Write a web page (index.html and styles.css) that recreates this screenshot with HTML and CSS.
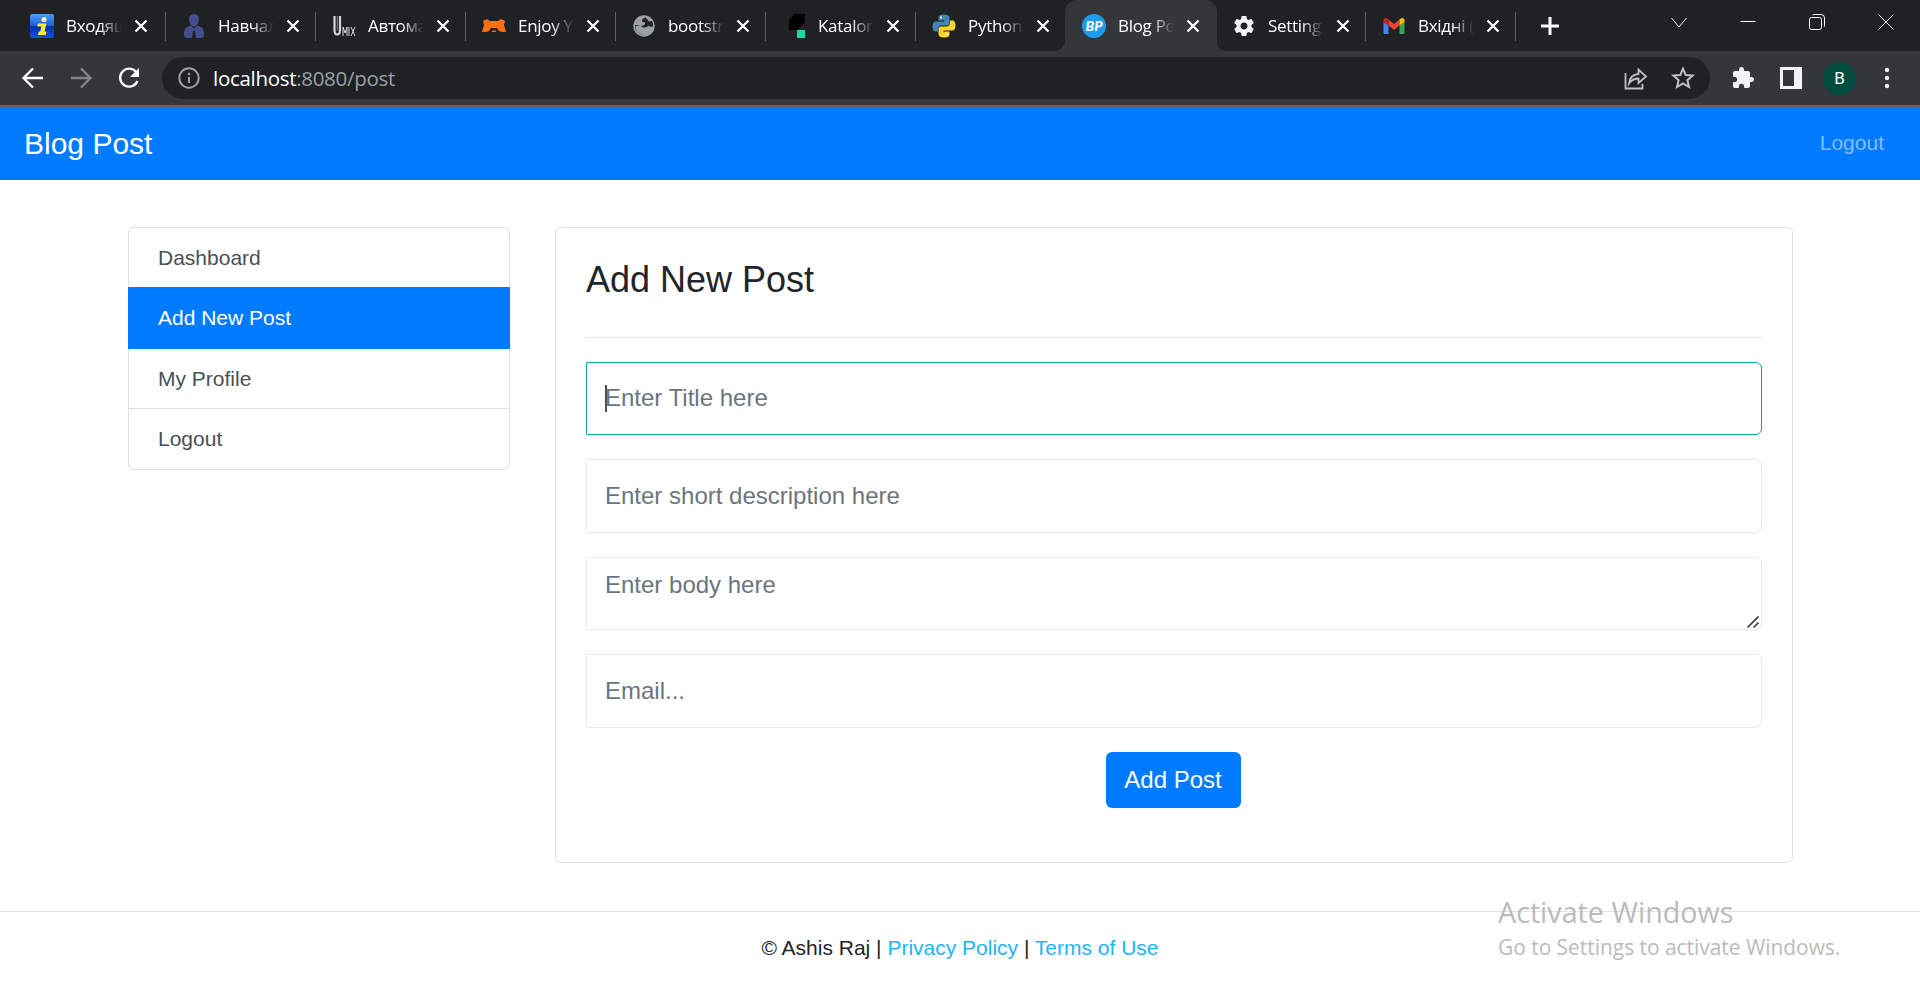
FILE: index.html
```html
<!DOCTYPE html>
<html lang="en">
<head>
<meta charset="utf-8">
<title>Blog Post</title>
<link rel="stylesheet" href="styles.css">
</head>
<body>
<header class="browser">
  <div class="tabstrip">
    <div class="tab">
      <svg class="fav" viewBox="0 0 24 24"><defs><linearGradient id="ib" x1="0" y1="0" x2="0" y2="1"><stop offset="0" stop-color="#4a9bf5"/><stop offset=".5" stop-color="#1a5fd8"/><stop offset=".52" stop-color="#0330a8"/><stop offset="1" stop-color="#1253dc"/></linearGradient></defs><rect width="24" height="24" rx="2" fill="url(#ib)"/><circle cx="14" cy="5.500" r="2.600" fill="#fff0a0"/><path d="M8 9.500h8.500l-2 8h2l-.7 3.500H8l.7-3.500h1.500l1.300-5H7.300z" fill="#ffe93b"/></svg>
      <span class="name">Входящ</span><svg class="x" viewBox="0 0 14 14"><path d="M1.5 1.5l11 11M12.5 1.5l-11 11"/></svg>
    </div>
    <div class="tab">
      <svg class="fav" viewBox="0 0 24 24" fill="#434e8c"><path d="M7 5c0-6.700 10-6.700 10 0 0 3.500-2 7.500-5 7.500S7 8.500 7 5z"/><path d="M2 21c0-7 2-8 7-9.500l3 3 3-3c5 1.500 7 2.500 7 9.500 0 4-6 3-8 3l-1-7h-2l-1 7c-2 0-8 1-8-3z"/></svg>
      <span class="name">Навчал</span><svg class="x" viewBox="0 0 14 14"><path d="M1.5 1.5l11 11M12.5 1.5l-11 11"/></svg>
    </div>
    <div class="tab">
      <svg class="fav" viewBox="0 0 24 24" fill="none" stroke="#d5d6d8"><path d="M2.500 2v14c0 6 5.500 6 5.500 0V2" stroke-width="2.200"/><path d="M5.300 2v15" stroke-width="1" stroke="#888"/><path d="M11 22v-9l2 6 2-6v9M17 13v9M19 13l4 9M23 13l-4 9" stroke-width="1"/></svg>
      <span class="name">Автома</span><svg class="x" viewBox="0 0 14 14"><path d="M1.5 1.5l11 11M12.5 1.5l-11 11"/></svg>
    </div>
    <div class="tab">
      <svg class="fav" viewBox="0 0 24 24"><path d="M1 7l4-2 3 2h8l3-2 4 2-1 4 2 7h-4l-3-1-2-3h-6l-2 3-3 1H0l2-7zM9.500 18l1-1.500h3l1 1.500z" fill="#ff6f0f"/></svg>
      <span class="name">Enjoy Y</span><svg class="x" viewBox="0 0 14 14"><path d="M1.5 1.5l11 11M12.5 1.5l-11 11"/></svg>
    </div>
    <div class="tab">
      <svg class="fav" viewBox="0 0 24 24"><circle cx="12" cy="12" r="10.700" fill="#9aa0a6"/><path d="M13.500 3.500c-3 .5-4 3-3 4.500l3 .5-1 2.500-3 1-6.500-1c0 5 2.500 8.500 6.500 9.500l1-3.500-2-2 2-1.500h2.500l3.500-1.500 4 1c1-2 .5-4-.5-6l-3 .5-2-2.500z" fill="#202124"/><path d="M3.500 12h5.500l3.500 3-1.500 1.500v4c-4 0-7.500-3.500-7.500-8.500z" fill="#9aa0a6"/></svg>
      <span class="name">bootstr</span><svg class="x" viewBox="0 0 14 14"><path d="M1.5 1.5l11 11M12.5 1.5l-11 11"/></svg>
    </div>
    <div class="tab">
      <svg class="fav" viewBox="0 0 24 24"><path d="M13 0h10v8l-7.500 8H7V5.500z" fill="#000"/><path d="M15 16h8v8h-8z" fill="#1ddba0"/></svg>
      <span class="name">Katalon</span><svg class="x" viewBox="0 0 14 14"><path d="M1.5 1.5l11 11M12.5 1.5l-11 11"/></svg>
    </div>
    <div class="tab no-sep">
      <svg class="fav" viewBox="0 0 24 24"><path d="M12 .5c-4.500 0-5.500 1.500-5.500 3.500v2.500H12.500v1H4C1.500 7.500.5 9.500.5 12.500s1 5 3 5h2.500V15c0-2 1.500-3.500 3.500-3.500H15c1.500 0 2.500-1 2.500-2.500V4C17.500 1.500 15.500.5 12 .5z" fill="#4584b6"/><path d="M12 .5c-4.500 0-5.500 1.500-5.500 3.500v2.500H12.500v1H4C1.500 7.500.5 9.500.5 12.500s1 5 3 5h2.500V15c0-2 1.500-3.500 3.500-3.500H15c1.500 0 2.500-1 2.500-2.500V4C17.500 1.500 15.500.5 12 .5z" transform="rotate(180 12 12)" fill="#ffd22e"/><circle cx="9" cy="3.500" r="1.100" fill="#fff"/><circle cx="15" cy="20.500" r="1.100" fill="#fff"/></svg>
      <span class="name">Python</span><svg class="x" viewBox="0 0 14 14"><path d="M1.5 1.5l11 11M12.5 1.5l-11 11"/></svg>
    </div>
    <div class="tab active no-sep">
      <span class="fav bp">BP</span>
      <span class="name">Blog Po</span><svg class="x" viewBox="0 0 14 14"><path d="M1.5 1.5l11 11M12.5 1.5l-11 11"/></svg>
    </div>
    <div class="tab">
      <svg class="fav" viewBox="0 0 24 24"><path fill="#f1f3f4" d="M19.430 12.980c.04-.32.07-.64.07-.98s-.03-.66-.07-.98l2.110-1.650c.19-.15.24-.42.12-.64l-2-3.460c-.12-.22-.39-.3-.61-.22l-2.490 1c-.52-.4-1.080-.73-1.690-.98l-.38-2.650C14.460 2.180 14.250 2 14 2h-4c-.25 0-.46.18-.49.42l-.38 2.650c-.61.25-1.170.59-1.690.98l-2.490-1c-.23-.09-.49 0-.61.22l-2 3.460c-.13.22-.07.49.12.64l2.110 1.650c-.04.32-.07.65-.07.98s.03.66.07.98l-2.110 1.650c-.19.15-.24.42-.12.64l2 3.460c.12.22.39.3.61.22l2.490-1c.52.4 1.080.73 1.690.98l.38 2.650c.03.24.24.42.49.42h4c.25 0 .46-.18.49-.42l.38-2.650c.61-.25 1.170-.59 1.690-.98l2.490 1c.23.09.49 0 .61-.22l2-3.460c.12-.22.07-.49-.12-.64zM12 15.500c-1.930 0-3.500-1.570-3.500-3.500s1.570-3.500 3.500-3.500 3.500 1.570 3.500 3.500-1.570 3.500-3.500 3.500z"/></svg>
      <span class="name">Setting</span><svg class="x" viewBox="0 0 14 14"><path d="M1.5 1.5l11 11M12.5 1.5l-11 11"/></svg>
    </div>
    <div class="tab">
      <svg class="fav" viewBox="0 0 24 24"><path d="M1.500 8l5 3.500V20H3Q1.500 20 1.500 18.500z" fill="#4285f4"/><path d="M22.500 8l-5 3.500V20H21q1.500 0 1.500-1.500z" fill="#34a853"/><path d="M6.500 5.500l5.500 4.500 5.500-4.500v6L12 16l-5.500-4.500z" fill="#ea4335"/><path d="M17.500 5.500l1.500-1.100C20.500 3.300 22.500 4.300 22.500 6.200V8l-5 3.500z" fill="#fbbc04"/><path d="M6.500 5.500L5 4.400C3.500 3.300 1.500 4.300 1.500 6.200V8l5 3.500z" fill="#c5221f"/></svg>
      <span class="name">Вхідні (</span><svg class="x" viewBox="0 0 14 14"><path d="M1.5 1.5l11 11M12.5 1.5l-11 11"/></svg>
    </div>
    <svg class="newtab" viewBox="0 0 18 18"><path d="M9 0v18M0 9h18"/></svg>
    <div class="winctl">
      <svg viewBox="0 0 16 16"><path d="M.5 3L8 12l7.500-9"/></svg>
      <svg viewBox="0 0 16 16"><path d="M.5 6.500h15"/></svg>
      <svg viewBox="0 0 16 16"><rect x=".5" y="2.500" width="12" height="12" rx="2"/><path d="M3.500 0Q4-.5 5-.5h7q3.500 0 3.500 3.500v7.500q0 1-.5 1.500"/></svg>
      <svg viewBox="0 0 16 16"><path d="M.5-.5l15 15M15.500-.5l-15 15"/></svg>
    </div>
  </div>
  <div class="toolbar">
    <div class="navbtns">
      <svg viewBox="0 0 24 24"><path d="M22 12H3M12 2.500L2.500 12l9.500 9.500"/></svg>
      <svg class="dim" viewBox="0 0 24 24"><path d="M2 12h19M12 2.500l9.500 9.500-9.500 9.500"/></svg>
      <svg viewBox="0 0 24 24"><path d="M19.500 6.500A9 9 0 1 0 20.500 15"/><path d="M22 2v9h-9z" class="solid"/></svg>
    </div>
    <div class="omnibox">
      <svg class="info" viewBox="0 0 22 22"><circle cx="11" cy="11" r="9.700"/><path d="M11 10v6M11 5.800v2.400"/></svg>
      <span class="url">localhost<span class="path">:8080/post</span></span>
      <svg class="share" viewBox="0 0 24 24"><path d="M1.500 7v15.500h17V18M5 17.500C5.500 12 9 8.500 14.500 8V3.500l7.500 7-7.500 6.500v-4.500c-4 0-7 1.500-9.500 5z"/></svg>
      <svg class="star" viewBox="0 0 24 24"><path d="M12 2.700l2.700 6.300 6.900.6-5.200 4.600 1.600 6.800-6-3.600L6 21l1.600-6.800L2.400 9.600l6.900-.6z"/></svg>
    </div>
    <svg class="ext" viewBox="0 0 24 24"><path fill="#f1f3f4" d="M20.500 11H19V7c0-1.100-.9-2-2-2h-4V3.500C13 2.120 11.880 1 10.500 1S8 2.120 8 3.500V5H4c-1.100 0-1.990.9-1.990 2v3.800H3.500c1.490 0 2.700 1.210 2.700 2.700s-1.210 2.700-2.700 2.700H2V20c0 1.100.9 2 2 2h3.800v-1.500c0-1.490 1.210-2.700 2.700-2.700s2.700 1.210 2.700 2.700V22H17c1.100 0 2-.9 2-2v-4h1.500c1.380 0 2.500-1.120 2.500-2.500S21.880 11 20.500 11z"/></svg>
    <svg class="panel" viewBox="0 0 22 22"><path fill="#f1f3f4" fill-rule="evenodd" d="M0 0h22v22H0zM3 3v16h11V3z"/></svg>
    <span class="avatar">B</span>
    <svg class="dots" viewBox="0 0 6 22" fill="#f1f3f4"><circle cx="3" cy="3" r="2.200"/><circle cx="3" cy="11" r="2.200"/><circle cx="3" cy="19" r="2.200"/></svg>
  </div>
</header>

<nav class="navbar"><a class="brand">Blog Post</a><a class="nav-link">Logout</a></nav>

<main class="container">
  <aside class="list-group">
    <a class="item">Dashboard</a>
    <a class="item current">Add New Post</a>
    <a class="item">My Profile</a>
    <a class="item">Logout</a>
  </aside>
  <section class="card">
    <h1>Add New Post</h1>
    <hr>
    <form>
      <div class="field focus"><span class="caret"></span>Enter Title here</div>
      <div class="field">Enter short description here</div>
      <div class="field area">Enter body here<svg class="grip" viewBox="0 0 12 12"><path d="M.5 11.500l11-11M6.500 11.500l5-5"/></svg></div>
      <div class="field">Email...</div>
      <button class="btn" type="button">Add Post</button>
    </form>
  </section>
</main>

<footer>© Ashis Raj | <a>Privacy Policy</a> | <a>Terms of Use</a></footer>

<div class="watermark"><div class="wm-title">Activate Windows</div><div class="wm-text">Go to Settings to activate Windows.</div></div>
</body>
</html>
```

FILE: styles.css
```css
* { box-sizing: border-box; }
body {
  margin: 0;
  height: 1008px;
  overflow: hidden;
  background: #fff;
  color: #212529;
  font: 21px/1.5 "Liberation Sans", Arial, sans-serif;
}
svg { display: block; flex: none; }

/* browser frame */
.browser { height: 107px; background: #35363a; border-bottom: 2px solid #5f6368; font-family: "Open Sans", "Noto Sans", sans-serif; }
.tabstrip { height: 51px; display: flex; background: #202124; padding-left: 15px; }
.tab { position: relative; width: 150px; height: 51px; display: flex; align-items: center; padding-left: 17px; flex: none; }
.tab:first-child { padding-left: 15px; }
.tab::after { content: ""; position: absolute; right: -1px; top: 12px; width: 1px; height: 29px; background: #5f6368; }
.tab.no-sep::after { display: none; }
.fav { width: 24px; height: 24px; margin-right: 12px; }
.name {
  width: 56px; color: #fff; font-size: 17px; line-height: 24px; letter-spacing: -.3px;
  white-space: nowrap; overflow: hidden;
  -webkit-mask-image: linear-gradient(90deg, #000 60%, transparent 100%);
  mask-image: linear-gradient(90deg, #000 60%, transparent 100%);
}
.x { width: 14px; height: 14px; margin-left: 12px; fill: none; stroke: #fff; stroke-width: 2.300; }
.tab.active { background: #35363a; border-radius: 12px 12px 0 0; box-shadow: 2px 0 #35363a; }
.tab.active::before {
  content: ""; position: absolute; left: -10px; right: -11px; bottom: 0; height: 10px;
  background:
    radial-gradient(circle at 0 0, transparent 9.500px, #35363a 10px) left / 10px 10px no-repeat,
    radial-gradient(circle at 100% 0, transparent 9.500px, #35363a 10px) right / 10px 10px no-repeat;
}
.bp { border-radius: 50%; background: #1d9bf0; color: #fff; font: italic 900 14px/24px "Lato", sans-serif; text-align: center; }
.newtab { width: 18px; height: 18px; margin: 17px 0 0 26px; fill: none; stroke: #fff; stroke-width: 3; }
.winctl { margin-left: auto; display: flex; gap: 53px; padding: 15px 26px 0 0; }
.winctl svg { width: 16px; height: 16px; fill: none; stroke: #fff; overflow: visible; }

.toolbar { height: 54px; display: flex; align-items: center; padding: 0 27px 0 21px; }
.navbtns { display: flex; gap: 24px; width: 141px; flex: none; }
.navbtns svg { width: 24px; height: 24px; fill: none; stroke: #fff; stroke-width: 2.300; }
.navbtns .dim { stroke: #828488; }
.navbtns .solid { fill: #fff; stroke: none; }
.omnibox { flex: none; width: 1548px; height: 42px; border-radius: 21px; background: #202124; display: flex; align-items: center; padding: 0 15px 0 16px; }
.info { width: 22px; height: 22px; margin-right: 13px; fill: none; stroke: #9aa0a6; stroke-width: 2; }
.url { color: #fff; font-size: 20.500px; line-height: 40px; letter-spacing: -.3px; }
.path { color: #9aa0a6; }
.share { width: 24px; height: 24px; margin-left: auto; fill: none; stroke: #bdc1c6; stroke-width: 1.800; }
.star { width: 24px; height: 24px; margin-left: 23px; fill: none; stroke: #bdc1c6; stroke-width: 2; }
.ext { width: 24px; height: 24px; margin-left: 21px; }
.panel { width: 22px; height: 22px; margin-left: 25px; }
.avatar { width: 33px; height: 33px; margin-left: 21px; border-radius: 50%; background: #004d40; color: #fff; font: 17px/33px Roboto, sans-serif; text-align: center; }
.dots { width: 6px; height: 22px; margin-left: 28px; }

/* page */
.navbar { height: 73px; display: flex; justify-content: space-between; align-items: center; padding: 0 36px 1px 24px; background: #007bff; color: #fff; }
.brand { font-size: 30px; }
.nav-link { color: rgba(255, 255, 255, .5); }
.container { display: flex; align-items: flex-start; gap: 45px; padding: 47px 127px 0 128px; }
.list-group { width: 382px; height: 243px; flex: none; border: 1px solid #dfdfdf; border-radius: 6px; color: #495057; }
.item { display: block; height: 61px; padding: 0 29px; line-height: 60px; border-top: 1px solid #dfdfdf; }
.item:first-child { height: 59px; border-top: 0; }
.item.current { height: 62px; margin: 0 -1px; padding: 0 30px; line-height: 61px; border-top: 0; background: #007bff; color: #fff; }
.item.current + .item { height: 59px; line-height: 59px; border-top: 0; }
.card { flex: 1; height: 636px; border: 1px solid #dfdfdf; border-radius: 6px; padding: 30px; }
h1 { margin: 0; font-size: 36px; font-weight: 400; line-height: 43px; }
hr { margin: 36px 0 24px; border: 0; border-top: 1px solid #e5e5e5; }
form { display: flex; flex-direction: column; gap: 24px; }
.field { position: relative; height: 74px; border: 1px solid #ebebeb; border-radius: 1px 6px 6px 1px; padding: 0 18px; font-size: 24px; line-height: 72px; color: #6c757d; }
.field.focus { height: 73px; border-color: #00a99d; line-height: 70px; }
.area { height: 73px; line-height: 54px; }
.caret { position: absolute; left: 18px; top: 22px; width: 2px; height: 27px; background: #495057; }
.grip { position: absolute; right: 2px; bottom: 1px; width: 12px; height: 12px; fill: none; stroke: #444; stroke-width: 1.700; }
.btn { align-self: center; width: 135px; height: 56px; margin-right: 2px; border: 0; border-radius: 6px; background: #007bff; color: #fff; font: 24px/56px "Liberation Sans", Arial, sans-serif; padding: 0; }
footer { margin-top: 48px; border-top: 1px solid #e2e2e2; padding-top: 20px; text-align: center; }
footer a { color: #19b5fe; }

.watermark { position: absolute; left: 1498px; top: 890px; color: #bbb; font-family: "Open Sans", "Noto Sans", sans-serif; white-space: nowrap; }
.wm-title { font-size: 28.700px; line-height: 44px; }
.wm-text { font-size: 20.900px; line-height: 27px; }
```
